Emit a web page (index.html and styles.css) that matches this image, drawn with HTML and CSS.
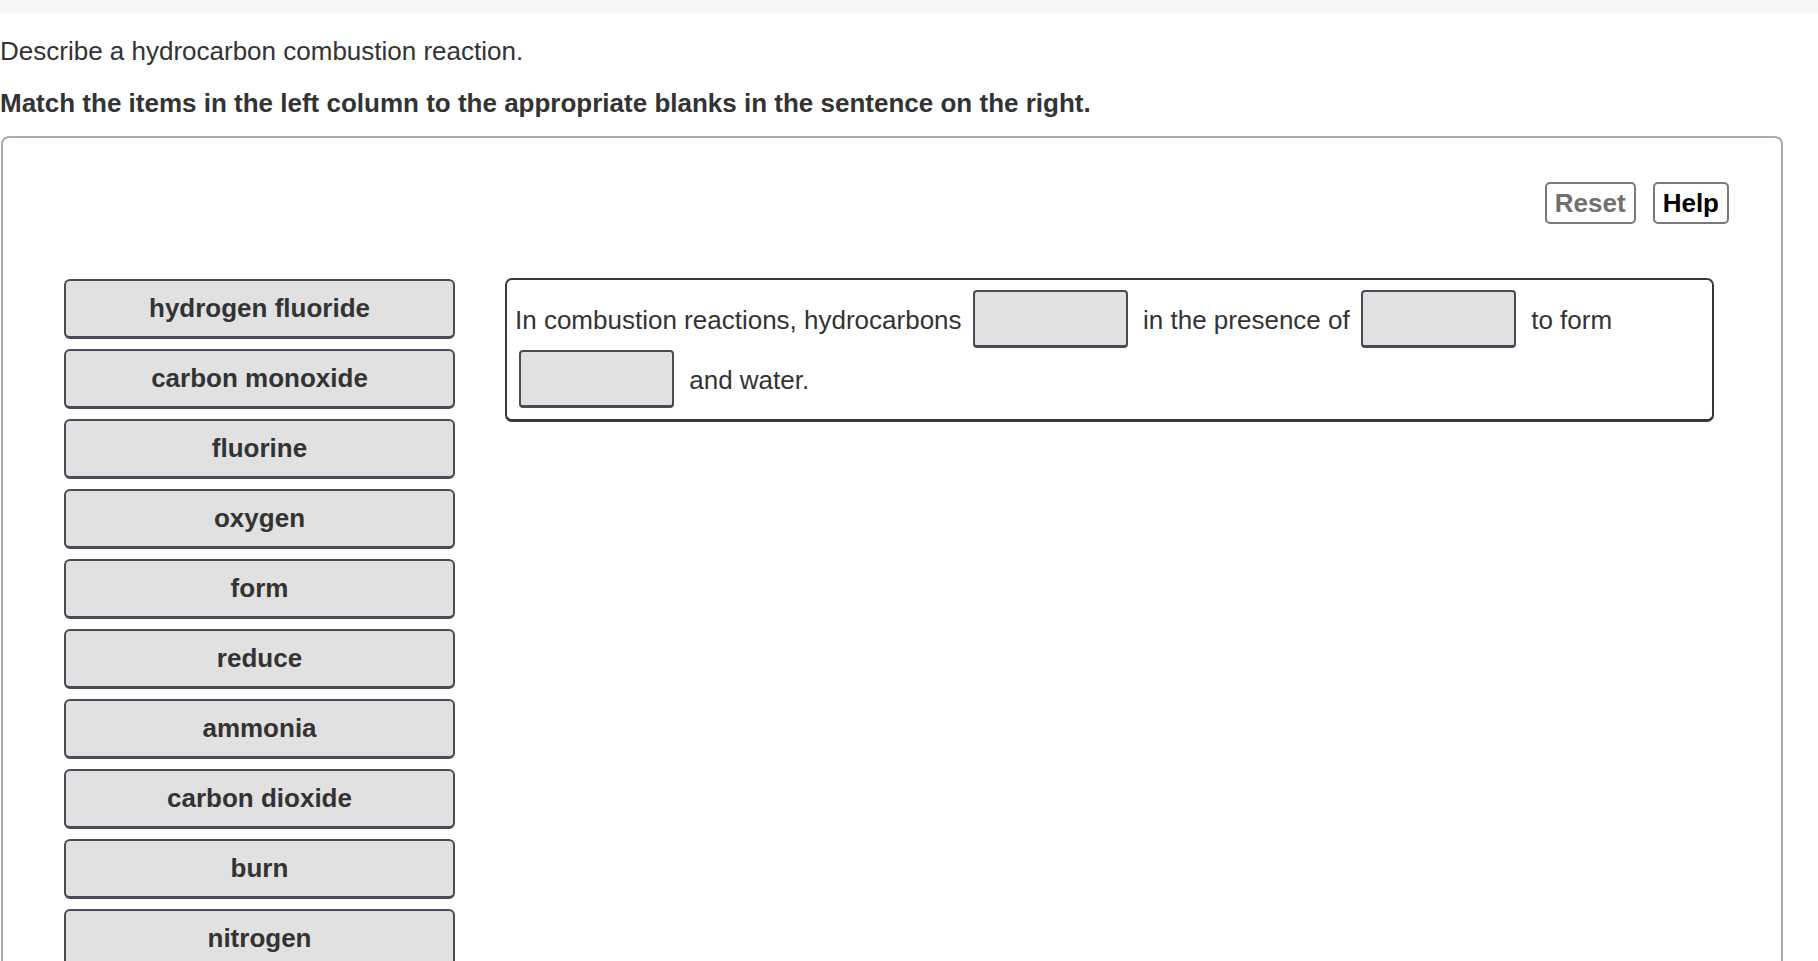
FILE: index.html
```html
<!DOCTYPE html>
<html lang="en">
<head>
<meta charset="utf-8">
<title>Hydrocarbon combustion</title>
<link rel="stylesheet" href="styles.css">
</head>
<body>
<div class="topbar"></div>
<p class="prompt">Describe a hydrocarbon combustion reaction.</p>
<p class="instruction">Match the items in the left column to the appropriate blanks in the sentence on the right.</p>
<div class="panel">
  <div class="toolbar">
    <button class="btn btn-reset">Reset</button>
    <button class="btn btn-help">Help</button>
  </div>
  <div class="workspace">
    <div class="items">
      <div class="item">hydrogen fluoride</div>
      <div class="item">carbon monoxide</div>
      <div class="item">fluorine</div>
      <div class="item">oxygen</div>
      <div class="item">form</div>
      <div class="item">reduce</div>
      <div class="item">ammonia</div>
      <div class="item">carbon dioxide</div>
      <div class="item">burn</div>
      <div class="item">nitrogen</div>
    </div>
    <div class="sentence">In combustion reactions, hydrocarbons <span class="blank"></span> in the presence of <span class="blank"></span> to form <span class="blank"></span> and water.</div>
  </div>
</div>
</body>
</html>
```
FILE: styles.css
```css
html, body {
  margin: 0;
  padding: 0;
  background: #ffffff;
}
body {
  font-family: "Liberation Sans", Arial, Helvetica, sans-serif;
  color: #333333;
  font-size: 26px;
  overflow: hidden;
  height: 961px;
}
.topbar {
  height: 13px;
  background: #f7f7f7;
}
.prompt {
  margin: 23px 0 0 0;
  line-height: 30px;
  font-size: 26px;
}
.instruction {
  margin: 22px 0 0 0;
  line-height: 30px;
  font-size: 26px;
  font-weight: bold;
}
.panel {
  margin: 18px 35px 0 1px;
  border: 2px solid #a9a9a9;
  border-radius: 8px;
  padding: 44px 52px 40px 61px;
  min-height: 900px;
}
.toolbar {
  display: flex;
  justify-content: flex-end;
  gap: 17px;
}
.btn {
  font-family: "Liberation Sans", Arial, Helvetica, sans-serif;
  font-size: 26px;
  font-weight: bold;
  height: 42px;
  padding: 0 8px;
  background: #ffffff;
  border: 2px solid #7a7a7a;
  border-radius: 5px;
  line-height: 38px;
}
.btn-reset {
  color: #707070;
}
.btn-help {
  color: #000000;
}
.workspace {
  display: flex;
  align-items: flex-start;
  gap: 50px;
  margin-top: 54px;
}
.items {
  flex: 0 0 391px;
  display: flex;
  flex-direction: column;
  gap: 10px;
  margin-top: 1px;
}
.item {
  box-sizing: border-box;
  height: 60px;
  display: flex;
  align-items: center;
  justify-content: center;
  background: #e1e1e2;
  border: 2px solid #4b4b57;
  border-bottom-width: 3px;
  border-radius: 6px;
  font-weight: bold;
  color: #333333;
}
.sentence {
  flex: 0 0 1209px;
  box-sizing: border-box;
  border: 2px solid #323a40;
  border-bottom-width: 3px;
  border-radius: 7px;
  padding: 10px 8px 9px 8px;
  line-height: 60px;
  color: #333333;
}
.blank {
  display: inline-block;
  box-sizing: border-box;
  width: 155px;
  height: 58px;
  margin: 0 8px 0 4px;
  vertical-align: -19px;
  background: #e1e1e2;
  border: 2px solid #4b4b57;
  border-bottom-width: 3px;
  border-radius: 4px;
}
```
